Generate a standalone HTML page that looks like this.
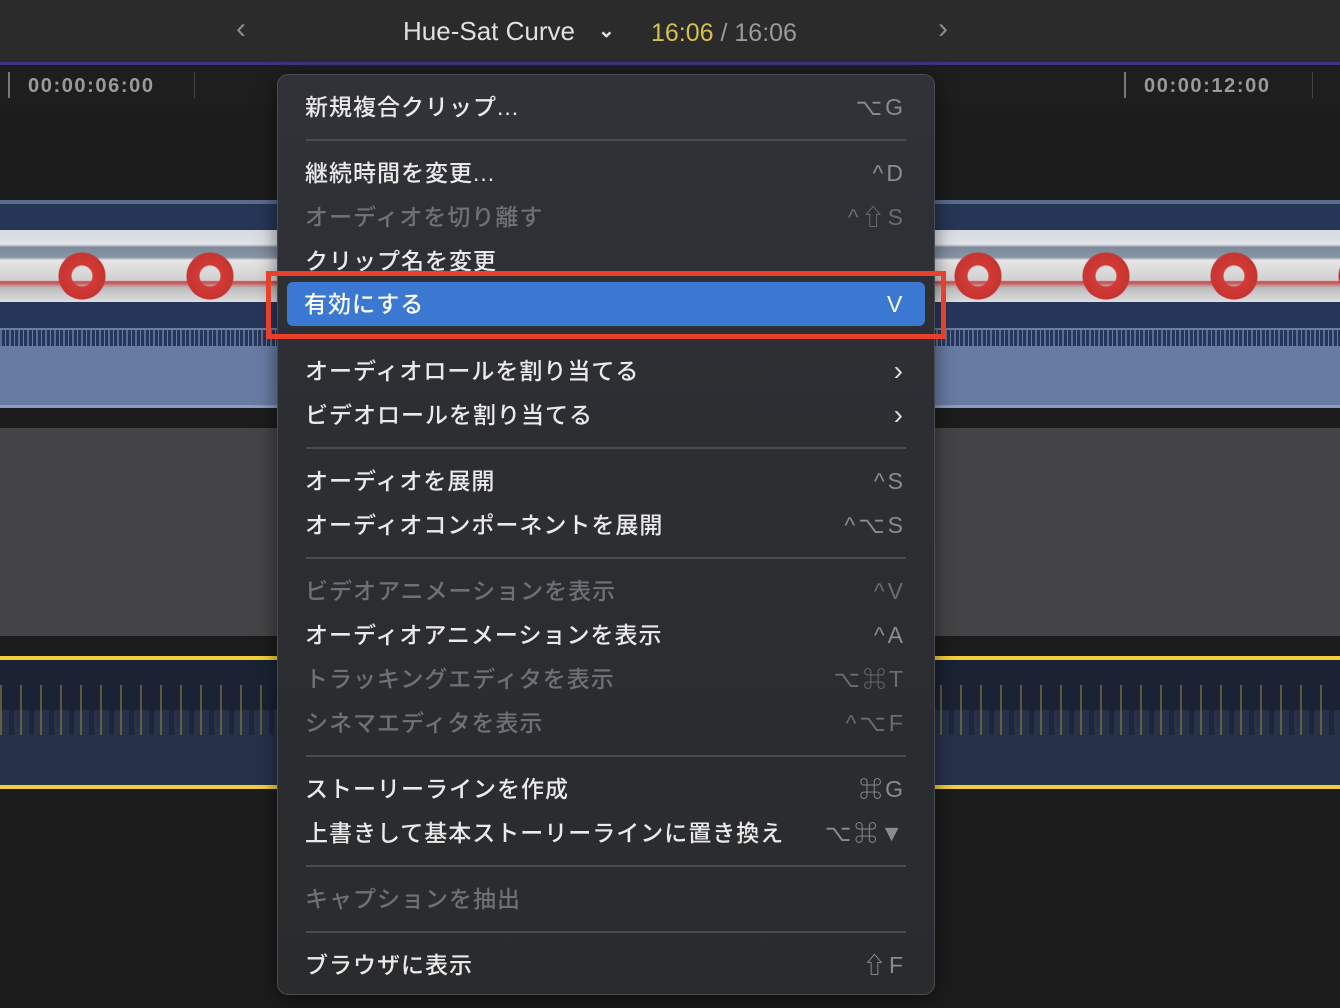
<!DOCTYPE html>
<html><head><meta charset="utf-8"><style>
*{margin:0;padding:0;box-sizing:border-box}
body{width:1340px;height:1008px;overflow:hidden;background:#1c1c1d;font-family:"Liberation Sans","Noto Sans CJK JP",sans-serif;position:relative}
.abs{position:absolute}
.top{left:0;top:0;width:1340px;height:62px;background:#2b2b2c}
.line{left:0;top:62px;width:1340px;height:3px;background:#3b3580}
.ruler{left:0;top:65px;width:1340px;height:40px;background:#1e1e1f}
.tc{color:#9a9a9a}
.thumbs{left:0;top:230px;width:1340px;height:72px;
background:
radial-gradient(circle at 82px 46px,transparent 10px,#d23a36 11px,#c73432 23px,transparent 24px),
linear-gradient(to bottom,#d7dbe0 0,#dfe2e6 20%,#7d8a99 24%,#8794a3 38%,#e6e6e6 42%,#d0d0d0 70%,#c44 72%,#bbb 80%,#ddd 100%);
background-size:128px 72px,100% 100%;background-repeat:repeat-x,no-repeat}
.menu{left:277px;top:74px;width:658px;height:921px;border-radius:11px;background:linear-gradient(#303238,#2c2e32 40%,#2a2b2d);border:1px solid #4a4c52;box-shadow:0 4px 20px rgba(0,0,0,.5)}
.it{position:absolute;left:27px;right:28px;height:40px;font-size:23px;letter-spacing:1px;font-weight:500;color:#eaeaea;line-height:40px;white-space:nowrap}
.it.d{color:#6e7075}
.it .k{position:absolute;right:0;top:0;color:#8a8c90;letter-spacing:3px;font-size:23px}
.it.d .k{color:#6a6c70}
.sep{position:absolute;left:28px;right:28px;height:2px;background:#4a4c50}
.hl{left:287px;top:282px;width:638px;height:44px;background:#3b78d1;border-radius:6px}
.red{left:266px;top:271px;width:680px;height:68px;border:5px solid #e8402b}
</style></head><body>
<div class="abs top"></div>
<div class="abs" style="left:236px;top:12px;color:#8a8a8a;font-size:30px">‹</div>
<div class="abs" style="left:938px;top:12px;color:#8a8a8a;font-size:30px">›</div>
<div class="abs" style="left:403px;top:16px;color:#e0e0e0;font-size:26px;font-weight:500">Hue-Sat Curve</div>
<div class="abs" style="left:598px;top:18px;color:#e0e0e0;font-size:20px;font-weight:bold">⌄</div>
<div class="abs" style="left:651px;top:19px;font-size:25px;color:#9a9a9a"><span style="color:#d4c04a">16:06</span> / 16:06</div>
<div class="abs line"></div>
<div class="abs ruler"></div>
<div class="abs" style="left:8px;top:72px;width:2px;height:26px;background:#777"></div>
<div class="abs tc" style="left:28px;top:75px;font-size:20px;letter-spacing:1.6px;font-weight:bold">00:00:06:00</div>
<div class="abs" style="left:194px;top:72px;width:1px;height:26px;background:#444"></div>
<div class="abs" style="left:1124px;top:72px;width:2px;height:26px;background:#777"></div>
<div class="abs tc" style="left:1144px;top:75px;font-size:20px;letter-spacing:1.6px;font-weight:bold">00:00:12:00</div>
<div class="abs" style="left:1312px;top:72px;width:1px;height:26px;background:#444"></div>
<div class="abs" style="left:0;top:200px;width:1340px;height:4px;background:#5a6b8c"></div>
<div class="abs" style="left:0;top:204px;width:1340px;height:98px;background:#263657"></div>
<div class="abs thumbs"></div>
<div class="abs" style="left:0;top:302px;width:1340px;height:106px;background:#26365a"></div>
<div class="abs" style="left:0;top:328px;width:1340px;height:2px;background:#6b7ea4"></div>
<div class="abs" style="left:0;top:345px;width:1340px;height:60px;background:#687ba3"></div>
<div class="abs" style="left:0;top:330px;width:1340px;height:16px;background:repeating-linear-gradient(90deg,#5a6c95 0 2px,#26365a 2px 5px,#6a7ca3 5px 6px,#26365a 6px 9px)"></div>
<div class="abs" style="left:0;top:405px;width:1340px;height:3px;background:#8a9cc0"></div>
<div class="abs" style="left:0;top:428px;width:1340px;height:208px;background:#444446"></div>
<div class="abs" style="left:0;top:656px;width:1340px;height:4px;background:#f2cf3a"></div>
<div class="abs" style="left:0;top:660px;width:1340px;height:125px;background:#1a2233"></div>
<div class="abs" style="left:0;top:710px;width:1340px;height:75px;background:#273249"></div>
<div class="abs" style="left:0;top:685px;width:1340px;height:50px;background:repeating-linear-gradient(90deg,#7a7040 0 2px,transparent 2px 9px,#1a2233 9px 14px,transparent 14px 20px);opacity:.7"></div>
<div class="abs" style="left:0;top:785px;width:1340px;height:4px;background:#f2cf3a"></div>
<div class="abs menu">
<div class="it" style="top:12px">新規複合クリップ...<span class="k">⌥G</span></div>
<div class="sep" style="top:64px"></div>
<div class="it" style="top:78px">継続時間を変更...<span class="k">^D</span></div>
<div class="it d" style="top:122px">オーディオを切り離す<span class="k">^⇧S</span></div>
<div class="it" style="top:166px">クリップ名を変更</div>
<div class="sep" style="top:262px"></div>
<div class="it" style="top:276px">オーディオロールを割り当てる<span class="k" style="color:#ddd;font-size:28px">›</span></div>
<div class="it" style="top:320px">ビデオロールを割り当てる<span class="k" style="color:#ddd;font-size:28px">›</span></div>
<div class="sep" style="top:372px"></div>
<div class="it" style="top:386px">オーディオを展開<span class="k">^S</span></div>
<div class="it" style="top:430px">オーディオコンポーネントを展開<span class="k">^⌥S</span></div>
<div class="sep" style="top:482px"></div>
<div class="it d" style="top:496px">ビデオアニメーションを表示<span class="k">^V</span></div>
<div class="it" style="top:540px">オーディオアニメーションを表示<span class="k">^A</span></div>
<div class="it d" style="top:584px">トラッキングエディタを表示<span class="k">⌥⌘T</span></div>
<div class="it d" style="top:628px">シネマエディタを表示<span class="k">^⌥F</span></div>
<div class="sep" style="top:680px"></div>
<div class="it" style="top:694px">ストーリーラインを作成<span class="k">⌘G</span></div>
<div class="it" style="top:738px">上書きして基本ストーリーラインに置き換え<span class="k">⌥⌘▼</span></div>
<div class="sep" style="top:790px"></div>
<div class="it d" style="top:804px">キャプションを抽出</div>
<div class="sep" style="top:856px"></div>
<div class="it" style="top:870px">ブラウザに表示<span class="k">⇧F</span></div>
</div>
<div class="abs hl"></div>
<div class="abs" style="left:304px;top:284px;font-size:23px;letter-spacing:1px;font-weight:500;line-height:40px;color:#fff">有効にする</div>
<div class="abs" style="left:887px;top:284px;font-size:23px;line-height:40px;color:#fff">V</div>
<div class="abs red"></div>
</body></html>
